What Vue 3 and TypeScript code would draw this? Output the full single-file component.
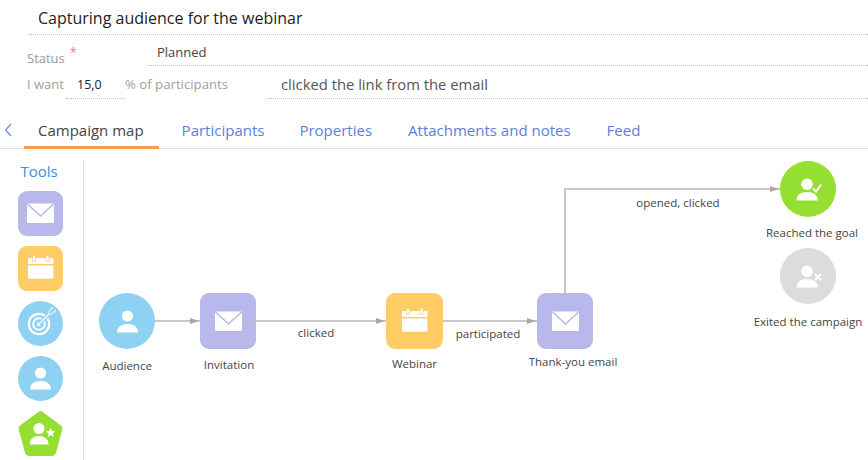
<script setup lang="ts">
const tabs = ['Campaign map', 'Participants', 'Properties', 'Attachments and notes', 'Feed']

const tools = [
  { shape: 'rounded', color: 'lavender', icon: 'mail' },
  { shape: 'rounded', color: 'yellow', icon: 'calendar' },
  { shape: 'round', color: 'blue', icon: 'target' },
  { shape: 'round', color: 'blue', icon: 'person' },
  { shape: 'pentagon', color: 'green', icon: 'person-star' },
]

const nodes = [
  { label: 'Audience', x: 99, y: 293, w: 56, shape: 'round', color: 'blue', icon: 'person', labelY: 73, labelDx: 0 },
  { label: 'Invitation', x: 200, y: 293, w: 56, shape: 'rounded', color: 'lavender', icon: 'mail', labelY: 72, labelDx: 1 },
  { label: 'Webinar', x: 386, y: 293, w: 57, shape: 'rounded', color: 'yellow', icon: 'calendar', labelY: 71, labelDx: 0 },
  { label: 'Thank-you email', x: 537, y: 293, w: 56, shape: 'rounded', color: 'lavender', icon: 'mail', labelY: 69, labelDx: 8 },
  { label: 'Reached the goal', x: 780, y: 161, w: 56, shape: 'round', color: 'green', icon: 'person-check', labelY: 72, labelDx: 4 },
  { label: 'Exited the campaign', x: 780, y: 248, w: 56, shape: 'round', color: 'gray', icon: 'person-cross', labelY: 74, labelDx: 0 },
]

const edgeLabels = [
  { text: 'clicked', x: 316, y: 332 },
  { text: 'participated', x: 488, y: 333 },
  { text: 'opened, clicked', x: 678, y: 202 },
]
</script>

<template>
  <div class="page">
    <svg class="sprite" aria-hidden="true">
      <symbol id="mail" viewBox="0 0 45 45">
        <rect x="9" y="12.5" width="27" height="19.5" rx="0.8" fill="#fff" />
        <path d="M9.5 13 L22.5 25 L35.5 13" fill="none" stroke="currentColor" stroke-width="1.6" />
      </symbol>
      <symbol id="calendar" viewBox="0 0 45 45">
        <rect x="10" y="12" width="25.4" height="6" fill="#fff" />
        <rect x="10" y="19.5" width="25.4" height="13.2" fill="#fff" />
        <rect x="14.4" y="9.4" width="3" height="5.8" fill="#fff" stroke="currentColor" stroke-width="0.8" />
        <rect x="28" y="9.4" width="3" height="5.8" fill="#fff" stroke="currentColor" stroke-width="0.8" />
      </symbol>
      <symbol id="target" viewBox="0 0 45 45">
        <circle cx="21" cy="23" r="10.2" fill="none" stroke="#fff" stroke-width="2.2" />
        <circle cx="21" cy="23" r="5.8" fill="none" stroke="#fff" stroke-width="2" />
        <circle cx="21" cy="23" r="2.2" fill="#fff" />
        <path d="M21 23 L32 12" stroke="currentColor" stroke-width="3.4" />
        <path d="M21 23 L32 12" stroke="#fff" stroke-width="1.3" />
        <path d="M30 11.5 L33 8.5 L33 6.5 M32.5 14 L35.5 11 L37.5 11 M33 8.5 L35.5 6.5 M35.5 11 L38 9" fill="none" stroke="#fff" stroke-width="1" />
      </symbol>
      <symbol id="person" viewBox="0 0 45 45">
        <circle cx="22.5" cy="17" r="5.6" fill="#fff" />
        <path d="M12 33.5 C12 28 16 25 22.5 25 C29 25 33 28 33 33.5 Z" fill="#fff" />
      </symbol>
      <symbol id="person-star" viewBox="0 0 45 45">
        <circle cx="21" cy="17.5" r="5.5" fill="#fff" />
        <path d="M11.7 33.5 C11.7 28 15.5 25 21 25 C26.5 25 30.5 28 30.5 33.5 Z" fill="#fff" />
        <path d="M32.7 16.5 L34 20 L37.5 20.2 L34.8 22.4 L35.7 26 L32.7 24 L29.7 26 L30.6 22.4 L27.9 20.2 L31.4 20 Z" fill="#fff" />
      </symbol>
      <symbol id="person-check" viewBox="0 0 45 45">
        <circle cx="21" cy="17.2" r="5.8" fill="#fff" />
        <path d="M10.5 33.5 C10.5 28 14.5 25 21 25 C27.5 25 31.8 28 31.8 33.5 Z" fill="#fff" />
        <path d="M27 21.5 L30 24.5 L35.2 17.5" fill="none" stroke="#fff" stroke-width="1.9" />
      </symbol>
      <symbol id="person-cross" viewBox="0 0 45 45">
        <circle cx="21" cy="17.2" r="5.8" fill="#fff" />
        <path d="M10.5 33.5 C10.5 28 14.5 25 21 25 C27.5 25 31.8 28 31.8 33.5 Z" fill="#fff" />
        <path d="M29 20 L35 26 M35 20 L29 26" fill="none" stroke="#fff" stroke-width="2" />
      </symbol>
    </svg>

    <header class="head">
      <div class="title">Capturing audience for the webinar</div>
      <div class="status-row">
        <span class="status-label">Status<i class="req">*</i></span>
        <span class="status-value">Planned</span>
      </div>
      <div class="goal-row">
        <span class="muted want">I want</span>
        <span class="percent">15,0</span>
        <span class="muted of">% of participants</span>
        <span class="action">clicked the link from the email</span>
      </div>
    </header>

    <nav class="tabs">
      <svg class="back" width="8" height="14" viewBox="0 0 8 14">
        <path d="M7 1 L1.5 7 L7 13" fill="none" stroke="#5b8fe0" stroke-width="1.2" />
      </svg>
      <a v-for="(tab, i) in tabs" :key="tab" class="tab" :class="{ active: i === 0 }">{{ tab }}</a>
    </nav>

    <main class="body">
      <aside class="tools">
        <div class="tools-title">Tools</div>
        <div
          v-for="tool in tools"
          :key="tool.icon"
          class="shape tool"
          :class="[tool.shape, tool.color]"
        >
          <svg v-if="tool.shape === 'pentagon'" class="pentagon-bg" viewBox="0 0 45 45">
            <path d="M22.5 0 Q23.5 0 25 1.2 L43 14.5 Q45 16 44.3 18.5 L38.2 41 Q37.2 45 33.5 45 L11.5 45 Q7.8 45 6.8 41 L0.7 18.5 Q0 16 2 14.5 L20 1.2 Q21.5 0 22.5 0 Z" fill="#95de32" />
          </svg>
          <svg class="glyph" width="45" height="45"><use :href="`#${tool.icon}`" /></svg>
        </div>
      </aside>

      <section class="canvas">
        <svg class="edges" width="868" height="460">
          <defs>
            <marker id="arrow" markerWidth="10" markerHeight="8" refX="10" refY="4" markerUnits="userSpaceOnUse" orient="auto">
              <path d="M0 1 L9 4 L0 7 Z" fill="#a8a8a8" />
            </marker>
          </defs>
          <path d="M155 321 H200" marker-end="url(#arrow)" />
          <path d="M256 321 H386" marker-end="url(#arrow)" />
          <path d="M443 321 H537" marker-end="url(#arrow)" />
          <path d="M565 293 V189 H780" marker-end="url(#arrow)" />
        </svg>

        <span
          v-for="edge in edgeLabels"
          :key="edge.text"
          class="edge-label"
          :style="{ left: `${edge.x}px`, top: `${edge.y}px` }"
        >{{ edge.text }}</span>

        <div
          v-for="node in nodes"
          :key="node.label"
          class="node"
          :style="{ left: `${node.x}px`, top: `${node.y}px`, width: `${node.w}px` }"
        >
          <div class="shape node-shape" :class="[node.shape, node.color]">
            <svg class="glyph" width="45" height="45"><use :href="`#${node.icon}`" /></svg>
          </div>
          <span
            class="node-label"
            :style="{ top: `${node.labelY - 9}px`, marginLeft: `${node.labelDx}px` }"
          >{{ node.label }}</span>
        </div>
      </section>
    </main>
  </div>
</template>

<style scoped>
.page {
  width: 868px;
  height: 460px;
  overflow: hidden;
  position: relative;
  background: #fff;
  font-family: "Open Sans", "Noto Sans", sans-serif;
  color: #444;
}

.sprite {
  position: absolute;
  width: 0;
  height: 0;
}

.head {
  padding-left: 29px;
}

.title {
  height: 34px;
  line-height: 37px;
  padding-left: 9px;
  font-size: 16px;
  color: #222;
  border-bottom: 1px dotted #bbb;
}

.status-row {
  display: flex;
  height: 31px;
}

.status-label {
  width: 119px;
  margin-left: -2px;
  padding-top: 13px;
  font-size: 13px;
  line-height: 20px;
  color: #999;
}

.req {
  position: relative;
  top: -6px;
  margin-left: 5px;
  font-style: normal;
  color: #f77;
}

.status-value {
  flex: 1;
  padding-left: 9px;
  margin-left: 2px;
  font-size: 13px;
  line-height: 35px;
  color: #444;
  border-bottom: 1px dotted #bbb;
}

.goal-row {
  display: flex;
  height: 33px;
  line-height: 37px;
  font-size: 13px;
}

.muted {
  color: #a0a0a0;
}

.want {
  width: 39px;
  margin-left: -2px;
}

.percent {
  width: 47px;
  padding-left: 11px;
  font-size: 12.5px;
  color: #222;
  border-bottom: 1px dotted #bbb;
}

.of {
  width: 143px;
  margin-left: 1px;
  font-size: 13.2px;
}

.action {
  flex: 1;
  padding-left: 13px;
  font-size: 14.8px;
  color: #555;
  border-bottom: 1px dotted #bbb;
}

.tabs {
  display: flex;
  align-items: flex-start;
  height: 50px;
  box-sizing: border-box;
  border-bottom: 1px solid #ddd;
}

.back {
  margin: 24px 12px 0 4px;
}

.tab {
  padding: 21px 14px 0;
  margin-right: 8px;
  font-size: 15px;
  line-height: 21px;
  color: #5b7fdb;
  box-sizing: border-box;
  height: 50px;
}

.tab:nth-of-type(2) {
  margin-right: 7px;
}

.tab.active {
  padding-right: 15px;
  margin-right: 9px;
  color: #444;
  border-bottom: 3px solid #f59b4f;
}

.body {
  display: flex;
}

.tools {
  width: 65px;
  height: 301px;
  margin-top: 10px;
  padding-left: 18px;
  border-right: 1px solid #e3e3e8;
  display: flex;
  flex-direction: column;
  gap: 10px;
}

.tools-title {
  width: 42px;
  padding-top: 3px;
  height: 19px;
  line-height: 19px;
  font-size: 15px;
  text-align: center;
  white-space: nowrap;
  color: #3a8fdc;
}

.shape {
  position: relative;
  display: flex;
  align-items: center;
  justify-content: center;
  flex: none;
}

.tool {
  width: 45px;
  height: 45px;
}

.node-shape {
  width: 100%;
  height: 56px;
}

.rounded {
  border-radius: 9px;
}

.round {
  border-radius: 50%;
}

.lavender {
  background: #b9b8ea;
  color: #b9b8ea;
}

.yellow {
  background: #ffcc66;
  color: #ffcc66;
}

.blue {
  background: #8ed1f3;
  color: #8ed1f3;
}

.green {
  background: #95de32;
  color: #95de32;
}

.gray {
  background: #dcdcdc;
  color: #dcdcdc;
}

.pentagon {
  background: none;
  color: #95de32;
}

.pentagon-bg {
  position: absolute;
  inset: 0;
}

.glyph {
  position: relative;
  flex: none;
}

.canvas {
  position: absolute;
  inset: 0;
  pointer-events: none;
}

.edges {
  position: absolute;
  inset: 0;
}

.edges path {
  fill: none;
  stroke: #c8c8c8;
  stroke-width: 2;
}

.edges marker path {
  stroke: none;
  fill: #a8a8a8;
}

.edge-label {
  position: absolute;
  transform: translate(-50%, -50%);
  font-size: 11.5px;
  color: #444;
  white-space: nowrap;
}

.node {
  position: absolute;
}

.node-label {
  position: absolute;
  left: 50%;
  transform: translateX(-50%);
  font-size: 11.5px;
  line-height: 18px;
  color: #444;
  white-space: nowrap;
}
</style>
